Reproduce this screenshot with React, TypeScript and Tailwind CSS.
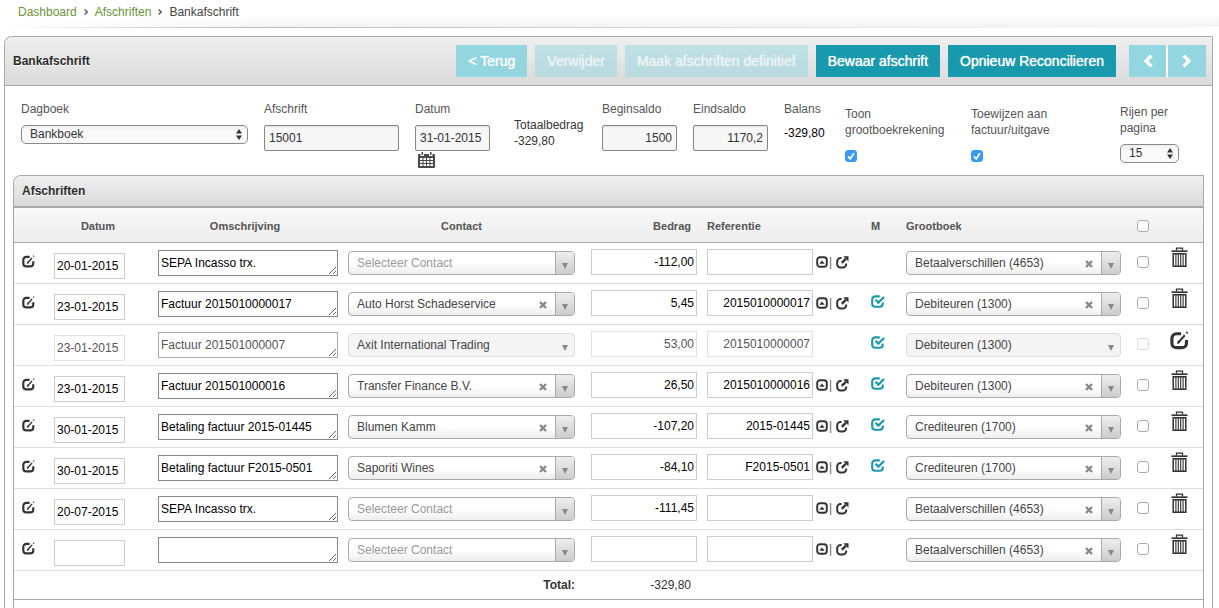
import { useState } from "react";

const CONTACTS = [
  "Auto Horst Schadeservice",
  "Axit International Trading",
  "Transfer Finance B.V.",
  "Blumen Kamm",
  "Saporiti Wines",
];

const LEDGERS = ["Betaalverschillen (4653)", "Debiteuren (1300)", "Crediteuren (1700)"];

type Row = {
  date: string;
  description: string;
  contact: string;
  amount: string;
  reference: string;
  matched?: boolean;
  ledger: string;
  locked?: boolean;
};

const ROWS: Row[] = [
  { date: "20-01-2015", description: "SEPA Incasso trx.", contact: "", amount: "-112,00", reference: "", ledger: LEDGERS[0] },
  { date: "23-01-2015", description: "Factuur 2015010000017", contact: CONTACTS[0], amount: "5,45", reference: "2015010000017", matched: true, ledger: LEDGERS[1] },
  { date: "23-01-2015", description: "Factuur 201501000007", contact: CONTACTS[1], amount: "53,00", reference: "2015010000007", matched: true, ledger: LEDGERS[1], locked: true },
  { date: "23-01-2015", description: "Factuur 201501000016", contact: CONTACTS[2], amount: "26,50", reference: "2015010000016", matched: true, ledger: LEDGERS[1] },
  { date: "30-01-2015", description: "Betaling factuur 2015-01445", contact: CONTACTS[3], amount: "-107,20", reference: "2015-01445", matched: true, ledger: LEDGERS[2] },
  { date: "30-01-2015", description: "Betaling factuur F2015-0501", contact: CONTACTS[4], amount: "-84,10", reference: "F2015-0501", matched: true, ledger: LEDGERS[2] },
  { date: "20-07-2015", description: "SEPA Incasso trx.", contact: "", amount: "-111,45", reference: "", ledger: LEDGERS[0] },
  { date: "", description: "", contact: "", amount: "", reference: "", ledger: LEDGERS[0] },
];

function EditIcon({ className }: { className: string }) {
  return (
    <svg viewBox="0 0 18 18" className={className} fill="none" stroke="#333" aria-hidden="true">
      <path d="M10.5 2.6H6A4.2 4.2 0 0 0 1.8 6.8v4.8A4.2 4.2 0 0 0 6 15.8h5.4a4.2 4.2 0 0 0 4.2-4.2V8.6" strokeWidth="3" />
      <path d="M8 10.8 14 4" strokeWidth="2" />
      <path d="m7 12 .6-2.6 1.8 1.6z" fill="#333" strokeWidth="0.6" />
      <path d="m15.6 2.2 1-1.1" strokeWidth="2.2" />
    </svg>
  );
}

function TrashIcon() {
  return (
    <svg viewBox="0 0 17 21" className="h-[21px] w-[17px]" fill="none" stroke="#333" aria-hidden="true">
      <path d="M5.5 3.5V1.2h6v2.3" strokeWidth="1.3" />
      <path d="M0.5 4.2h16" strokeWidth="1.7" />
      <path d="M2.2 6.7h12.6v12.6H2.2z" strokeWidth="1.5" />
      <path d="M4.9 7v12M7.3 7v12M9.7 7v12M12.1 7v12" strokeWidth="1.1" />
    </svg>
  );
}

function CollapseIcon() {
  return (
    <svg viewBox="0 0 12 12" className="size-3" fill="none" stroke="#333" aria-hidden="true">
      <rect x="1.2" y="1.2" width="9.6" height="9.6" rx="2.8" strokeWidth="1.9" />
      <path d="M3.3 7.8h5.4L6 4.6z" fill="#333" stroke="none" />
    </svg>
  );
}

function ExternalIcon() {
  return (
    <svg viewBox="0 0 13 13" className="size-[13px]" fill="none" stroke="#333" aria-hidden="true">
      <path d="M5.6 1.9H4.6A3.4 3.4 0 0 0 1.2 5.3v2.9a3.4 3.4 0 0 0 3.4 3.4h2.2a3.4 3.4 0 0 0 3.4-3.4v-.8" strokeWidth="2" />
      <path d="M5.8 6.8 9.8 2.8" strokeWidth="2.4" />
      <path d="M7.2 .2h5.3v5.3z" fill="#333" stroke="none" />
    </svg>
  );
}

function MatchedIcon() {
  return (
    <svg viewBox="0 0 14 13" className="h-[13px] w-[14px]" fill="none" stroke="#1899ae" role="img" aria-label="Gematcht">
      <path d="M8.8 1.4H4.2A3 3 0 0 0 1.2 4.4v4.4a3 3 0 0 0 3 3h4.6a3 3 0 0 0 3-3V7.6" strokeWidth="2.1" />
      <path d="m4.6 4.8 2.7 2.8 5.8-5.6" strokeWidth="2.2" />
    </svg>
  );
}

function CalendarIcon() {
  return (
    <svg viewBox="0 0 17 16" className="h-4 w-[17px]" aria-hidden="true">
      <path d="M1 2h15a1 1 0 0 1 1 1v12a1 1 0 0 1-1 1H1a1 1 0 0 1-1-1V3a1 1 0 0 1 1-1z" fill="#4a4a4a" />
      <path d="M2.5 0h3.5v4H2.5zM11 0h3.5v4H11z" fill="#fff" />
      <path d="M3.5 0h1.5v3H3.5zM12 0h1.5v3H12z" fill="#4a4a4a" />
      <path d="M2 6h13v8H2z" fill="#fff" />
      <path d="M2 8.5h13M2 11.5h13M5 6v8M8.5 6v8M12 6v8" stroke="#4a4a4a" strokeWidth="1" />
    </svg>
  );
}

function Checkbox({ label, defaultChecked, disabled }: { label: string; defaultChecked?: boolean; disabled?: boolean }) {
  const [checked, setChecked] = useState(!!defaultChecked);
  return (
    <span className="relative block size-3">
      <input
        type="checkbox"
        aria-label={label}
        checked={checked}
        disabled={disabled}
        onChange={(e) => setChecked(e.target.checked)}
        className="block size-3 appearance-none rounded-[3px] border border-[#aaa] bg-white checked:border-[#3b99fc] checked:bg-[#3b99fc] disabled:border-[#d8d8d8]"
      />
      {checked && (
        <svg viewBox="0 0 12 12" className="pointer-events-none absolute inset-0 size-3" fill="none" stroke="#fff" strokeWidth="1.7">
          <path d="m3 6.4 2.2 2.4L9 3.2" />
        </svg>
      )}
    </span>
  );
}

function NativeSelect({ id, options }: { id: string; options: string[] }) {
  return (
    <div className="relative">
      <select
        id={id}
        className="block h-[19px] w-full appearance-none rounded-[5px] border border-[#888] bg-linear-to-b from-[#efefef] to-[#fafafa] to-30% pb-px pl-2 text-[#333]"
      >
        {options.map((o) => (
          <option key={o}>{o}</option>
        ))}
      </select>
      <svg viewBox="0 0 6 11" className="pointer-events-none absolute top-1 right-1.5 h-[11px] w-1.5" fill="#333">
        <path d="M0 4.6 3 0l3 4.6zM0 6.4 3 11l3-4.6z" />
      </svg>
    </div>
  );
}

function ComboBox({
  label,
  options,
  initial,
  placeholder,
  disabled,
}: {
  label: string;
  options: string[];
  initial: string;
  placeholder: string;
  disabled?: boolean;
}) {
  const [value, setValue] = useState(initial);
  return (
    <div className="relative">
      <select
        aria-label={label}
        value={value}
        disabled={disabled}
        onChange={(e) => setValue(e.target.value)}
        className={`block h-6 w-full appearance-none rounded border pl-2 opacity-100 ${
          disabled ? "border-[#ddd] bg-[#f4f4f4]" : "border-[#aaa] bg-linear-to-b from-white from-50% to-[#eee]"
        } ${value ? "text-[#444]" : "text-[#999]"}`}
      >
        <option value="">{placeholder}</option>
        {options.map((o) => (
          <option key={o}>{o}</option>
        ))}
      </select>
      {value && !disabled && (
        <button
          type="button"
          aria-label="Wissen"
          onClick={() => setValue("")}
          className="absolute top-[9px] right-7 size-2"
        >
          <svg viewBox="0 0 8 8" className="size-2" stroke="#888" strokeWidth="2.4">
            <path d="m1 1 6 6M7 1 1 7" />
          </svg>
        </button>
      )}
      <span
        className={`pointer-events-none absolute top-px right-px flex h-[22px] w-[19px] items-center justify-center rounded-r-[3px] ${
          disabled ? "" : "border-l border-[#aaa] bg-linear-to-b from-[#eee] to-[#ccc]"
        }`}
      >
        <svg viewBox="0 0 6 6" className="mt-1.5 size-1.5" fill="#888">
          <path d="M0 0h6L3 6z" />
        </svg>
      </span>
    </div>
  );
}

const CELL = "border-b border-[#ddd] p-0 align-top";
const FIELD = "block h-[26px] w-full border border-[#ccc] bg-white text-black disabled:border-[#e2e2e2] disabled:text-[#555]";
const HEAD_FIELD =
  "block h-[26px] w-full rounded-[2px] border border-[#888] bg-[#f7f7f7] px-1 text-[#333] shadow-[inset_0_1px_1px_#ddd]";
const BUTTON = "h-8 px-3 text-sm text-white [text-shadow:0_0_1px_#fff]";
const DISABLED_BUTTON = "h-8 bg-[#93d6df]/50 px-3 text-sm text-[#eef3f4] [text-shadow:0_0_1px_#eef3f4]";

function StatementRow({ row }: { row: Row }) {
  const { locked } = row;
  return (
    <tr className="h-[41px]">
      <td className={`${CELL} pt-3 pl-2`}>
        {!locked && (
          <button type="button" aria-label="Bewerken" className="block">
            <EditIcon className="size-[13px]" />
          </button>
        )}
      </td>
      <td className={`${CELL} pt-2.5 pr-[33px]`}>
        <input aria-label="Datum" defaultValue={row.date} disabled={locked} className={`${FIELD} px-0.5`} />
      </td>
      <td className={`${CELL} pt-[7px] pr-2.5`}>
        <textarea
          aria-label="Omschrijving"
          rows={1}
          defaultValue={row.description}
          disabled={locked}
          className="block h-[26px] w-full resize overflow-hidden border border-[#888] bg-white px-0.5 leading-6 text-black disabled:border-[#aaa] disabled:text-[#555]"
        />
      </td>
      <td className={`${CELL} pt-2 pr-4`}>
        <ComboBox label="Contact" options={CONTACTS} initial={row.contact} placeholder="Selecteer Contact" disabled={locked} />
      </td>
      <td className={`${CELL} pt-1.5 pr-2.5`}>
        <input aria-label="Bedrag" defaultValue={row.amount} disabled={locked} className={`${FIELD} px-0.5 text-right`} />
      </td>
      <td className={`${CELL} pt-1.5 pr-4`}>
        <div className="flex items-center">
          <input
            aria-label="Referentie"
            defaultValue={row.reference}
            disabled={locked}
            className={`${FIELD} min-w-0 flex-1 px-0.5 text-right`}
          />
          <div className="flex w-9 items-center gap-px pl-[3px]">
            {!locked && (
              <>
                <button type="button" aria-label="Inklappen">
                  <CollapseIcon />
                </button>
                <span className="text-[#666]">|</span>
                <a href="#open" aria-label="Openen" className="ml-auto">
                  <ExternalIcon />
                </a>
              </>
            )}
          </div>
        </div>
      </td>
      <td className={`${CELL} pt-[11px] pl-1.5`}>{row.matched && <MatchedIcon />}</td>
      <td className={`${CELL} pt-2 pr-4`}>
        <ComboBox label="Grootboek" options={LEDGERS} initial={row.ledger} placeholder="Selecteer Grootboek" disabled={locked} />
      </td>
      <td className={`${CELL} pt-[13px]`}>
        <Checkbox label="Selecteer regel" disabled={locked} />
      </td>
      <td className={`${CELL} pt-1`}>
        {locked ? (
          <button type="button" aria-label="Bewerken" className="mt-0.5 block">
            <EditIcon className="size-[19px]" />
          </button>
        ) : (
          <button type="button" aria-label="Verwijderen" className="ml-px block">
            <TrashIcon />
          </button>
        )}
      </td>
    </tr>
  );
}

export default function App() {
  return (
    <div className="flex min-h-screen flex-col bg-white font-['Liberation_Sans',Arial,sans-serif] text-xs text-[#333]">
      <nav aria-label="Kruimelpad" className="mb-2">
        <div className="bg-linear-to-b from-white from-50% to-[#f3f3f3]">
          <ol className="flex h-[27px] items-start gap-[7px] bg-linear-to-r from-white to-transparent to-30% pt-1 pl-[18px] leading-4">
            <li>
              <a href="#dashboard" className="text-[#6b9338]">Dashboard</a>
            </li>
            <li aria-hidden="true" className="flex h-4 items-center">
              <svg viewBox="0 0 4 6" className="h-1.5 w-1" fill="none" stroke="#555" strokeWidth="1.3">
                <path d="m.6.5 2.6 2.5L.6 5.5" />
              </svg>
            </li>
            <li>
              <a href="#afschriften" className="text-[#6b9338]">Afschriften</a>
            </li>
            <li aria-hidden="true" className="flex h-4 items-center">
              <svg viewBox="0 0 4 6" className="h-1.5 w-1" fill="none" stroke="#555" strokeWidth="1.3">
                <path d="m.6.5 2.6 2.5L.6 5.5" />
              </svg>
            </li>
            <li className="text-[#444]">Bankafschrift</li>
          </ol>
        </div>
        <div className="h-px bg-linear-to-r from-transparent via-[#bbb] via-20% to-transparent" />
      </nav>

      <main className="mr-1.5 ml-1 flex flex-1 flex-col rounded-tl-lg rounded-tr-[2px] border border-b-0 border-[#a9a9a9]">
        <header className="flex h-[49px] items-center justify-between rounded-tl-lg border-b border-[#a9a9a9] bg-linear-to-b from-[#efefef] to-[#dadada] pr-1.5 pl-2">
          <h1 className="font-bold text-[#2b2b2b] [text-shadow:0_1px_0_#fff]">Bankafschrift</h1>
          <div className="flex gap-2">
            <button type="button" className={`${BUTTON} bg-[#93d6df]`}>&lt; Terug</button>
            <button type="button" disabled className={DISABLED_BUTTON}>Verwijder</button>
            <button type="button" disabled className={DISABLED_BUTTON}>Maak afschriften definitief</button>
            <button type="button" className={`${BUTTON} bg-[#1899ae]`}>Bewaar afschrift</button>
            <button type="button" className={`${BUTTON} bg-[#1899ae]`}>Opnieuw Reconcilieren</button>
            <div className="ml-[5px] flex gap-0.5 bg-white">
              <button type="button" aria-label="Vorige" className="flex h-8 w-[37px] items-center justify-center bg-[#93d6df]">
                <svg viewBox="0 0 10 14" className="h-3.5 w-2.5" fill="none" stroke="#fff" strokeWidth="3.4">
                  <path d="M8.4 1.6 3 7l5.4 5.4" />
                </svg>
              </button>
              <button type="button" aria-label="Volgende" className="flex h-8 w-[38px] items-center justify-center bg-[#93d6df]">
                <svg viewBox="0 0 10 14" className="h-3.5 w-2.5" fill="none" stroke="#fff" strokeWidth="3.4">
                  <path d="M1.6 1.6 7 7l-5.4 5.4" />
                </svg>
              </button>
            </div>
          </div>
        </header>

        <form className="grid grid-cols-[243fr_151fr_99fr_88fr_91fr_91fr_61fr_126fr_149fr_84fr] items-start pt-[15px] pr-2 pb-[7px] pl-4 leading-4 text-[#555]">
          <div className="pr-4">
            <label htmlFor="dagboek" className="mb-2 block">Dagboek</label>
            <NativeSelect id="dagboek" options={["Bankboek", "Kasboek"]} />
          </div>
          <div className="pr-4">
            <label htmlFor="afschrift" className="mb-2 block">Afschrift</label>
            <input id="afschrift" defaultValue="15001" className={HEAD_FIELD} />
          </div>
          <div className="pr-6">
            <label htmlFor="datum" className="mb-2 block">Datum</label>
            <input id="datum" defaultValue="31-01-2015" className={HEAD_FIELD} />
            <button type="button" aria-label="Kies datum" className="mt-px ml-[3px] block">
              <CalendarIcon />
            </button>
          </div>
          <div className="pt-4 text-[#333]">
            <div>Totaalbedrag</div>
            <div>-329,80</div>
          </div>
          <div className="pr-4">
            <label htmlFor="beginsaldo" className="mb-2 block">Beginsaldo</label>
            <input id="beginsaldo" defaultValue="1500" className={`${HEAD_FIELD} text-right`} />
          </div>
          <div className="pr-4">
            <label htmlFor="eindsaldo" className="mb-2 block">Eindsaldo</label>
            <input id="eindsaldo" defaultValue="1170,2" className={`${HEAD_FIELD} text-right`} />
          </div>
          <div>
            <div className="mb-2">Balans</div>
            <div className="text-black">-329,80</div>
          </div>
          <div className="pt-[5px]">
            <div className="mb-3">Toon<br />grootboekrekening</div>
            <Checkbox label="Toon grootboekrekening" defaultChecked />
          </div>
          <div className="pt-[5px]">
            <div className="mb-3">Toewijzen aan<br />factuur/uitgave</div>
            <Checkbox label="Toewijzen aan factuur/uitgave" defaultChecked />
          </div>
          <div className="pt-[3px] pr-[25px]">
            <label htmlFor="rijen" className="mb-2 block">Rijen per<br />pagina</label>
            <NativeSelect id="rijen" options={["15", "25", "50"]} />
          </div>
        </form>

        <section className="mx-2 flex-1 rounded-tl-lg border border-b-0 border-[#a9a9a9]">
          <h2 className="flex h-8 items-center rounded-tl-lg border-b-2 border-[#a9a9a9] bg-linear-to-b from-[#efefef] to-[#dadada] pl-2 font-bold text-[#2b2b2b] [text-shadow:0_1px_0_#fff]">
            Afschriften
          </h2>
          <table className="w-full table-fixed border-separate border-spacing-0">
            <colgroup>
              <col className="w-[40px]" />
              <col className="w-[104px]" />
              <col className="w-[190px]" />
              <col className="w-[243px]" />
              <col className="w-[116px]" />
              <col className="w-[158px]" />
              <col className="w-[41px]" />
              <col className="w-[231px]" />
              <col className="w-[33px]" />
              <col className="w-[33px]" />
            </colgroup>
            <thead className="bg-linear-to-b from-[#f8f8f8] to-[#ececec] text-[11px] text-[#555]">
              <tr className="h-[35px] *:border-b *:border-[#a9a9a9] *:pt-0.5 *:pb-0">
                <th />
                <th className="pr-4">Datum</th>
                <th className="pr-4">Omschrijving</th>
                <th className="pr-4">Contact</th>
                <th className="pr-4 text-right">Bedrag</th>
                <th className="text-left">Referentie</th>
                <th className="pr-5 text-center">M</th>
                <th className="text-left">Grootboek</th>
                <th>
                  <Checkbox label="Selecteer alles" />
                </th>
                <th />
              </tr>
            </thead>
            <tbody>
              {ROWS.map((row, i) => (
                <StatementRow key={i} row={row} />
              ))}
            </tbody>
            <tfoot>
              <tr className="h-[29px] *:border-b *:border-[#a9a9a9] *:py-0">
                <td colSpan={4} className="pr-4 text-right font-bold">Total:</td>
                <td className="pr-4 text-right">-329,80</td>
                <td colSpan={5} />
              </tr>
            </tfoot>
          </table>
        </section>
      </main>
    </div>
  );
}
